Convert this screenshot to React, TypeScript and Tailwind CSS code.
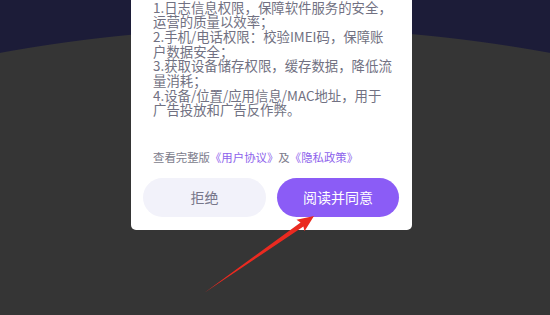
import React from "react";

const lines = [
  "1.日志信息权限，保障软件服务的安全，",
  "运营的质量以效率；",
  "2.手机/电话权限：校验IMEI码，保障账",
  "户数据安全；",
  "3.获取设备储存权限，缓存数据，降低流",
  "量消耗；",
  "4.设备/位置/应用信息/MAC地址，用于",
  "广告投放和广告反作弊。",
];

function Arrow() {
  // red tapered pointer aiming at the agree button
  return (
    <svg className="pointer-events-none absolute inset-0" width="550" height="315" viewBox="0 0 550 315">
      <polygon
        points="204,293 300.6,222.5 296.5,219.8 314,216 304.5,231.2 303.4,226.6"
        fill="#ea2a20"
      />
    </svg>
  );
}

export default function App() {
  return (
    <div
      className="relative h-[315px] w-[550px] overflow-hidden bg-[radial-gradient(circle_1530px_at_275px_1558px,#353535_1529.5px,#1c1c38_1530.5px)]"
      style={{ fontFamily: '"Noto Sans CJK SC", "Noto Sans", sans-serif' }}
    >
      <div className="ml-[131px] flex w-[281px] flex-col rounded-b-[5px] bg-white px-[22px] pb-[13px]">
        <div className="-mt-[0.5px] text-[13.4px] leading-[14.7px] text-[#717182]">
          {lines.map((l) => (
            <p key={l} className="whitespace-nowrap">
              {l}
            </p>
          ))}
        </div>
        <p className="mt-[32px] whitespace-nowrap text-[11.4px] leading-[16px] text-[#7c7c8c]">
          查看完整版<span className="text-[#8d62ec]">《用户协议》</span>及
          <span className="text-[#8d62ec]">《隐私政策》</span>
        </p>
        <div className="-mx-[10px] mt-[13px] flex gap-[11px]">
          <button className="flex h-[39px] w-[123px] items-center justify-center rounded-full bg-[#f2f2fa] text-[14px] text-[#77778a]">
            拒绝
          </button>
          <button className="flex h-[39px] w-[122px] items-center justify-center rounded-full bg-[#8b5cf6] text-[14px] text-white">
            阅读并同意
          </button>
        </div>
      </div>
      <Arrow />
    </div>
  );
}
